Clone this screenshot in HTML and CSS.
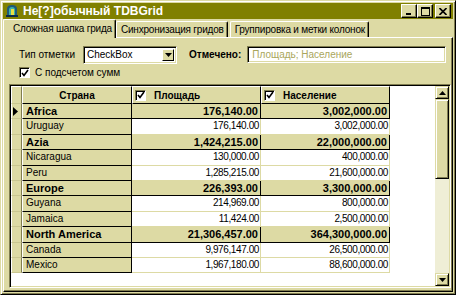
FILE: index.html
```html
<!DOCTYPE html>
<html>
<head>
<meta charset="utf-8">
<link rel="stylesheet" href="styles.css">
</head>
<body>
<div class="window">
  <div class="titlebar">
    <svg class="app-icon" width="14" height="14" viewBox="0 0 14 14">
      <path d="M2 12 L2 5 Q2 1 7 1 Q12 1 12 5 L12 12 Z" fill="#1e5a78"/>
      <path d="M4 12 L4 6 Q4 3 7 3 Q10 3 10 6 L10 12 Z" fill="#3fb0a8"/>
      <rect x="6" y="5" width="3" height="6" fill="#e8e040"/>
      <rect x="1" y="11" width="12" height="2" fill="#0c2a48"/>
    </svg>
    <span class="title">Не[?]обычный TDBGrid</span>
    <div class="caption-buttons">
      <span class="cbtn"><svg width="8" height="7" viewBox="0 0 8 7"><rect x="1" y="5" width="5" height="2" fill="#000"/></svg></span>
      <span class="cbtn"><svg width="9" height="9" viewBox="0 0 9 9"><rect x="0.5" y="0.5" width="8" height="8" fill="none" stroke="#000"/><rect x="0" y="0" width="9" height="2" fill="#000"/></svg></span>
      <span class="cbtn gap"><svg width="8" height="7" viewBox="0 0 8 7"><path d="M0.5 0 L7.5 7 M7.5 0 L0.5 7" stroke="#000" stroke-width="1.6"/></svg></span>
    </div>
  </div>
  <div class="tabs">
    <div class="tab active">Сложная шапка грида</div>
    <div class="tab">Синхронизация гридов</div>
    <div class="tab third">Группировка и метки колонок</div>
  </div>
  <div class="panel">
    <div class="opt-row">
      <span class="lbl">Тип отметки</span>
      <div class="combo"><span class="combo-text">CheckBox</span><span class="combo-btn"><svg width="7" height="4" viewBox="0 0 7 4"><path d="M0 0 H7 L3.5 4 Z" fill="#000"/></svg></span></div>
      <span class="lbl bold marked">Отмечено:</span>
      <div class="edit">Площадь; Население</div>
    </div>
    <div class="check-row">
      <span class="chk"><svg width="8" height="8" viewBox="0 0 8 8"><path d="M1 4 L3 6.5 L7 1" fill="none" stroke="#000" stroke-width="1.6"/></svg></span>
      <span class="lbl">С подсчетом сумм</span>
    </div>
    <div class="grid-frame">
      <div class="grid">
        <div class="hc ind"></div>
        <div class="hc country">Страна</div>
        <div class="hc num"><span class="chk"><svg width="8" height="8" viewBox="0 0 8 8"><path d="M1 4 L3 6.5 L7 1" fill="none" stroke="#000" stroke-width="1.6"/></svg></span>Площадь</div>
        <div class="hc num"><span class="chk"><svg width="8" height="8" viewBox="0 0 8 8"><path d="M1 4 L3 6.5 L7 1" fill="none" stroke="#000" stroke-width="1.6"/></svg></span>Население</div>
        <div class="fill"></div>

        <div class="ic ind cur"><svg width="5" height="9" viewBox="0 0 5 9"><path d="M0 0 L5 4.5 L0 9 Z" fill="#000"/></svg></div>
        <div class="cc grp">Africa</div><div class="vc grp">176,140.00</div><div class="vc grp">3,002,000.00</div><div class="fill"></div>
        <div class="ic ind"></div>
        <div class="cc">Uruguay</div><div class="vc">176,140.00</div><div class="vc">3,002,000.00</div><div class="fill"></div>
        <div class="ic ind"></div>
        <div class="cc grp">Azia</div><div class="vc grp">1,424,215.00</div><div class="vc grp">22,000,000.00</div><div class="fill"></div>
        <div class="ic ind"></div>
        <div class="cc">Nicaragua</div><div class="vc">130,000.00</div><div class="vc">400,000.00</div><div class="fill"></div>
        <div class="ic ind"></div>
        <div class="cc">Peru</div><div class="vc">1,285,215.00</div><div class="vc">21,600,000.00</div><div class="fill"></div>
        <div class="ic ind"></div>
        <div class="cc grp">Europe</div><div class="vc grp">226,393.00</div><div class="vc grp">3,300,000.00</div><div class="fill"></div>
        <div class="ic ind"></div>
        <div class="cc">Guyana</div><div class="vc">214,969.00</div><div class="vc">800,000.00</div><div class="fill"></div>
        <div class="ic ind"></div>
        <div class="cc">Jamaica</div><div class="vc">11,424.00</div><div class="vc">2,500,000.00</div><div class="fill"></div>
        <div class="ic ind"></div>
        <div class="cc grp">North America</div><div class="vc grp">21,306,457.00</div><div class="vc grp">364,300,000.00</div><div class="fill"></div>
        <div class="ic ind"></div>
        <div class="cc">Canada</div><div class="vc">9,976,147.00</div><div class="vc">26,500,000.00</div><div class="fill"></div>
        <div class="ic ind"></div>
        <div class="cc">Mexico</div><div class="vc">1,967,180.00</div><div class="vc">88,600,000.00</div><div class="fill"></div>
      </div>
      <div class="scrollbar">
        <span class="sbtn"><svg width="7" height="4" viewBox="0 0 7 4"><path d="M0 4 H7 L3.5 0 Z" fill="#000"/></svg></span>
        <span class="thumb"></span>
        <span class="track"></span>
        <span class="sbtn"><svg width="7" height="4" viewBox="0 0 7 4"><path d="M0 0 H7 L3.5 4 Z" fill="#000"/></svg></span>
      </div>
    </div>
  </div>
</div>
</body>
</html>
```

FILE: styles.css
```css
* { box-sizing: border-box; }
html, body { margin: 0; padding: 0; }
body {
  width: 456px;
  height: 295px;
  overflow: hidden;
  background: #dddaa4;
  font-family: "Liberation Sans", Arial, sans-serif;
  font-size: 10px;
  color: #000;
}
.window {
  width: 456px;
  height: 295px;
  background: #dddaa4;
  border-top: 1px solid #dddaa4;
  border-left: 1px solid #dddaa4;
  border-right: 1px solid #000;
  border-bottom: 1px solid #000;
  box-shadow: inset 1px 1px 0 #fff, inset -1px -1px 0 #807d50;
  padding: 2px;
  display: flex;
  flex-direction: column;
}
.titlebar {
  height: 16px;
  background: #808000;
  display: flex;
  align-items: center;
  padding-left: 2px;
  flex-shrink: 0;
}
.app-icon { margin-right: 4px; }
.title {
  color: #fff;
  font-weight: bold;
  font-size: 12px;
  flex: 1;
}
.caption-buttons { display: flex; align-items: center; padding-right: 2px; }
.cbtn {
  width: 16px;
  height: 14px;
  background: #dddaa4;
  border-top: 1px solid #fff;
  border-left: 1px solid #fff;
  border-right: 1px solid #000;
  border-bottom: 1px solid #000;
  box-shadow: inset -1px -1px 0 #807d50;
  display: flex;
  align-items: center;
  justify-content: center;
}
.cbtn.gap { margin-left: 2px; }
.tabs {
  display: flex;
  height: 18px;
  align-items: flex-end;
  flex-shrink: 0;
  position: relative;
  z-index: 1;
}
.tab {
  height: 16px;
  padding: 0 3px 0 4px;
  border-top: 1px solid #fff;
  border-left: 1px solid #fff;
  border-right: 1px solid #000;
  box-shadow: inset -1px 0 0 #807d50;
  border-radius: 2px 2px 0 0;
  line-height: 15px;
  white-space: nowrap;
  letter-spacing: -0.2px;
}
.tab.active {
  height: 19px;
  margin-bottom: -1px;
  background: #dddaa4;
  padding: 1px 3px 0 9px;
  line-height: 15px;
}
.tab.third { margin-left: 2px; }
.panel {
  flex: 1;
  border-top: 1px solid #fff;
  border-left: 1px solid #fff;
  border-right: 1px solid #000;
  border-bottom: 1px solid #000;
  box-shadow: inset -1px -1px 0 #807d50;
  padding: 7px 1px 3px 5px;
  display: flex;
  flex-direction: column;
}
.opt-row {
  display: flex;
  align-items: center;
  height: 19px;
  padding-left: 10px;
}
.lbl { white-space: nowrap; }
.bold { font-weight: bold; }
.combo {
  margin-left: 8px;
  width: 94px;
  height: 18px;
  background: #fff;
  border-top: 1px solid #807d50;
  border-left: 1px solid #807d50;
  border-right: 1px solid #fff;
  border-bottom: 1px solid #fff;
  box-shadow: inset 1px 1px 0 #000, inset -1px -1px 0 #dddaa4;
  display: flex;
  align-items: center;
  padding: 2px 2px 2px 3px;
}
.combo-text { flex: 1; }
.combo-btn {
  width: 12px;
  height: 12px;
  background: #dddaa4;
  border-top: 1px solid #fff;
  border-left: 1px solid #fff;
  border-right: 1px solid #000;
  border-bottom: 1px solid #000;
  display: flex;
  align-items: center;
  justify-content: center;
}
.marked { margin-left: 12px; }
.edit {
  margin-left: 6px;
  width: 199px;
  height: 17px;
  background: #fff;
  border-top: 1px solid #807d50;
  border-left: 1px solid #807d50;
  border-right: 1px solid #fff;
  border-bottom: 1px solid #fff;
  box-shadow: inset 1px 1px 0 #000, inset -1px -1px 0 #dddaa4;
  color: #aaa65c;
  padding: 1px 4px;
  line-height: 13px;
  white-space: nowrap;
}
.check-row {
  display: flex;
  align-items: center;
  height: 13px;
  margin-top: 2px;
  padding-left: 10px;
}
.chk {
  width: 11px;
  height: 11px;
  background: #fff;
  border-top: 1px solid #807d50;
  border-left: 1px solid #807d50;
  border-right: 1px solid #fff;
  border-bottom: 1px solid #fff;
  box-shadow: inset 1px 1px 0 #000;
  display: inline-flex;
  align-items: center;
  justify-content: center;
  margin-right: 5px;
  flex-shrink: 0;
}
.grid-frame {
  margin-top: 5px;
  flex: 1;
  display: flex;
  border-top: 1px solid #807d50;
  border-left: 1px solid #807d50;
  border-right: 1px solid #fff;
  border-bottom: 1px solid #fff;
  box-shadow: inset 1px 1px 0 #000, inset -1px -1px 0 #dddaa4;
  padding: 1px;
  background: #fff;
}
.grid {
  flex: 1;
  display: grid;
  grid-template-columns: 11px 110px 129px 129px 1fr;
  grid-template-rows: 18px;
  grid-auto-rows: 15.4px;
  align-content: start;
  background: #fff;
}
.fill { background: #fff; }
.hc {
  background: #dddaa4;
  border-top: 1px solid #fff;
  border-left: 1px solid #fff;
  border-right: 1px solid #000;
  border-bottom: 1px solid #000;
  font-weight: bold;
  display: flex;
  align-items: center;
  white-space: nowrap;
  overflow: hidden;
}
.hc.country { justify-content: center; }
.hc.num { padding-left: 2px; }
.hc.num .chk { margin-right: 8px; }
.ind {
  background: #dddaa4;
  border-left: 1px solid #fff;
  border-right: 1px solid #807d50;
  border-bottom: 1px solid #c9c690;
}
.ic.cur { display: flex; align-items: center; padding-left: 1px; }
.cc {
  background: #dddaa4;
  border-left: 1px solid #fff;
  border-right: 1px solid #000;
  border-bottom: 1px solid #000;
  padding-left: 3px;
  white-space: nowrap;
  overflow: hidden;
  font-size: 10px;
  line-height: 14px;
}
.vc {
  background: #fff;
  border-right: 1px solid #dddaa4;
  border-bottom: 1px solid #dddaa4;
  text-align: right;
  padding-right: 1px;
  white-space: nowrap;
  overflow: hidden;
  font-size: 10px;
  letter-spacing: -0.4px;
  line-height: 14px;
}
.grp { font-weight: bold; }
.cc.grp { font-size: 11px; }
.vc.grp {
  background: #dddaa4;
  border-right: 1px solid #000;
  border-bottom: 1px solid #000;
  padding-right: 2px;
  font-size: 11px;
  letter-spacing: 0;
}
.scrollbar {
  width: 14px;
  display: flex;
  flex-direction: column;
  background: #efeed6;
}
.sbtn {
  height: 13px;
  background: #dddaa4;
  border-top: 1px solid #dddaa4;
  border-left: 1px solid #dddaa4;
  border-right: 1px solid #000;
  border-bottom: 1px solid #000;
  box-shadow: inset 1px 1px 0 #fff, inset -1px -1px 0 #807d50;
  display: flex;
  align-items: center;
  justify-content: center;
  flex-shrink: 0;
}
.thumb {
  height: 80px;
  background: #dddaa4;
  border-top: 1px solid #dddaa4;
  border-left: 1px solid #dddaa4;
  border-right: 1px solid #000;
  border-bottom: 1px solid #000;
  box-shadow: inset 1px 1px 0 #fff, inset -1px -1px 0 #807d50;
  flex-shrink: 0;
}
.track { flex: 1; }
```
